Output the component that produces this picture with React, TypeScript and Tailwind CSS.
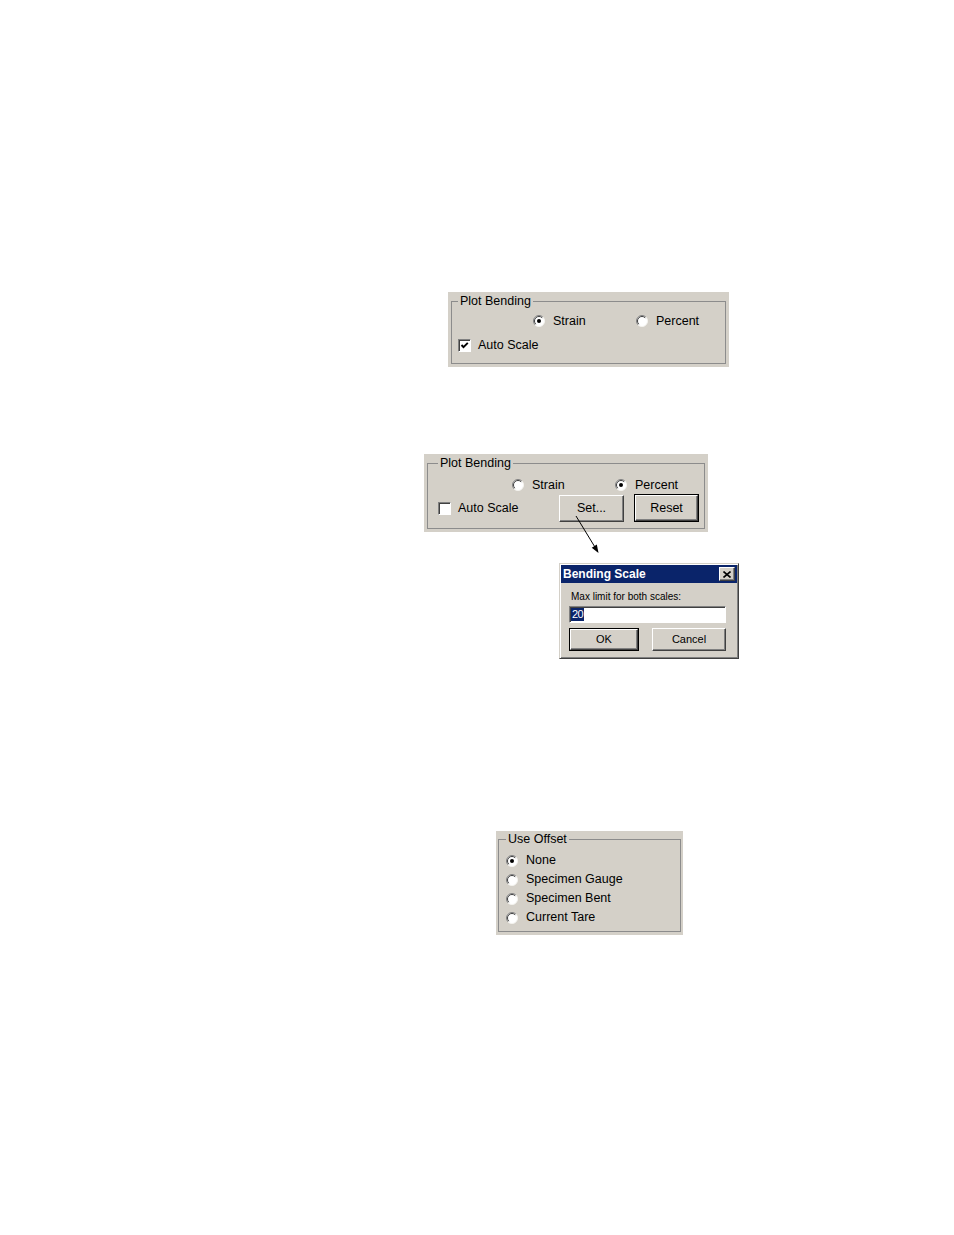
import React from 'react'

const raised =
  'border border-t-white border-l-white border-r-[#404040] border-b-[#404040] shadow-[inset_-1px_-1px_0_#808080]'

function Radio({ checked }: { checked?: boolean }) {
  return (
    <svg width="12" height="12" viewBox="0 0 12 12" className="shrink-0">
      <circle cx="6" cy="6" r="5.5" fill="#fff" />
      <path d="M2.1 9.9 A5.5 5.5 0 0 1 9.9 2.1" stroke="#808080" fill="none" />
      <path d="M2.8 9.2 A4.5 4.5 0 0 1 9.2 2.8" stroke="#404040" fill="none" />
      <path d="M9.9 2.1 A5.5 5.5 0 0 1 2.1 9.9" stroke="#f4f3ef" fill="none" />
      {checked && <circle cx="6" cy="6" r="2" fill="#000" />}
    </svg>
  )
}

function Check({ checked }: { checked?: boolean }) {
  return (
    <div className="w-[13px] h-[13px] shrink-0 bg-white border border-t-[#808080] border-l-[#808080] border-r-white border-b-white shadow-[inset_1px_1px_0_#404040]">
      {checked && (
        <svg width="11" height="11" viewBox="0 0 11 11">
          <polyline points="2.5,5 4.5,7.2 8.8,2.8" stroke="#000" strokeWidth="1.9" fill="none" />
        </svg>
      )}
    </div>
  )
}

function Option({ label, checked, box, className = '' }: { label: string; checked?: boolean; box?: boolean; className?: string }) {
  return (
    <div className={`flex items-center ${box ? 'gap-[7px]' : 'gap-2'} ${className}`}>
      {box ? <Check checked={checked} /> : <Radio checked={checked} />}
      <span>{label}</span>
    </div>
  )
}

function Button({ label, def, className = '' }: { label: string; def?: boolean; className?: string }) {
  if (def) {
    return (
      <div className={`border border-black ${className}`}>
        <div className={`h-full w-full flex items-center justify-center ${raised}`}>{label}</div>
      </div>
    )
  }
  return <div className={`flex items-center justify-center ${raised} ${className}`}>{label}</div>
}

export default function App() {
  return (
    <div className="relative w-[954px] min-h-[1235px] bg-white overflow-hidden text-black text-[12.5px] [font-family:'Liberation_Sans',Arial,sans-serif]">
      <div className="pt-[292px]">
        {/* Plot Bending, auto scale */}
        <div className="ml-[448px] w-[281px] h-[75px] bg-[#d4d0c8] px-[3px] pb-[3px]">
          <fieldset className="h-full border border-[#8c8c8c]">
            <legend className="ml-[6px] px-[2px] leading-[18px]">Plot Bending</legend>
            <div className="mt-[3px] h-4 flex items-center">
              <Option label="Strain" checked className="ml-[81px] w-[103px]" />
              <Option label="Percent" />
            </div>
            <div className="mt-[8px] h-4 flex items-center">
              <Option label="Auto Scale" box checked className="ml-[6px]" />
            </div>
          </fieldset>
        </div>

        {/* Plot Bending, manual scale */}
        <div className="mt-[87px] ml-[424px] w-[284px] h-[78px] bg-[#d4d0c8] px-[3px] pb-[3px]">
          <fieldset className="h-full border border-[#8c8c8c]">
            <legend className="ml-[10px] px-[2px] leading-[18px]">Plot Bending</legend>
            <div className="mt-[5px] h-4 flex items-center">
              <Option label="Strain" className="ml-[84px] w-[103px]" />
              <Option label="Percent" checked />
            </div>
            <div className="mt-[1px] h-[28px] flex items-center">
              <Option label="Auto Scale" box className="ml-[10px] w-[121px]" />
              <Button label="Set..." className="w-[65px] h-[27px]" />
              <Button label="Reset" def className="ml-[10px] w-[65px] h-[28px]" />
            </div>
          </fieldset>
        </div>

        {/* Bending Scale dialog */}
        <div className="mt-[31px] ml-[559px] w-[180px] h-[96px] bg-[#d4d0c8] p-[1px] border border-t-[#d4d0c8] border-l-[#d4d0c8] border-r-[#404040] border-b-[#404040] shadow-[inset_1px_1px_0_#fff,inset_-1px_-1px_0_#808080]">
          <div className="h-[18px] bg-[#0a246a] flex items-center justify-between pl-[2px] pr-[2px]">
            <span className="text-white font-bold text-[12px]">Bending Scale</span>
            <div className={`w-[16px] h-[14px] bg-[#d4d0c8] flex items-center justify-center ${raised}`}>
              <svg width="8" height="7" viewBox="0 0 8 7">
                <path d="M0.5 0.5 L7.5 6.5 M7.5 0.5 L0.5 6.5" stroke="#000" strokeWidth="1.6" />
              </svg>
            </div>
          </div>
          <div className="pl-[8px] text-[10px]">
            <div className="mt-[8px] leading-[12px] pl-[2px]">Max limit for both scales:</div>
            <div className="mt-[3px] w-[157px] h-[17px] bg-white border border-t-[#808080] border-l-[#808080] border-r-white border-b-white shadow-[inset_1px_1px_0_#404040] flex items-center pl-[1px]">
              <span className="bg-[#0a246a] text-white text-[11px] leading-[13px] px-[1px] tracking-[-0.5px]">20</span>
            </div>
            <div className="mt-[5px] flex gap-[13px] text-[11px]">
              <Button label="OK" def className="w-[70px] h-[23px]" />
              <Button label="Cancel" className="w-[74px] h-[23px]" />
            </div>
          </div>
        </div>

        {/* Use Offset */}
        <div className="mt-[172px] ml-[496px] w-[187px] h-[104px] bg-[#d4d0c8] px-[2px] pb-[3px]">
          <fieldset className="h-full border border-[#8c8c8c]">
            <legend className="ml-[7px] px-[2px] leading-[16px]">Use Offset</legend>
            <div className="mt-[4px] flex flex-col">
              {['None', 'Specimen Gauge', 'Specimen Bent', 'Current Tare'].map((o, i) => (
                <div key={o} className="h-[19px] flex items-center">
                  <Option label={o} checked={i === 0} className="ml-[7px]" />
                </div>
              ))}
            </div>
          </fieldset>
        </div>
      </div>

      {/* arrow from Set... to dialog */}
      <svg className="absolute left-[570px] top-[512px]" width="34" height="46" viewBox="0 0 34 46">
        <line x1="6" y1="4" x2="25.5" y2="36" stroke="#000" strokeWidth="1" />
        <polygon points="28.5,41 26.85,32.6 21.75,35.8" fill="#000" />
      </svg>
    </div>
  )
}
